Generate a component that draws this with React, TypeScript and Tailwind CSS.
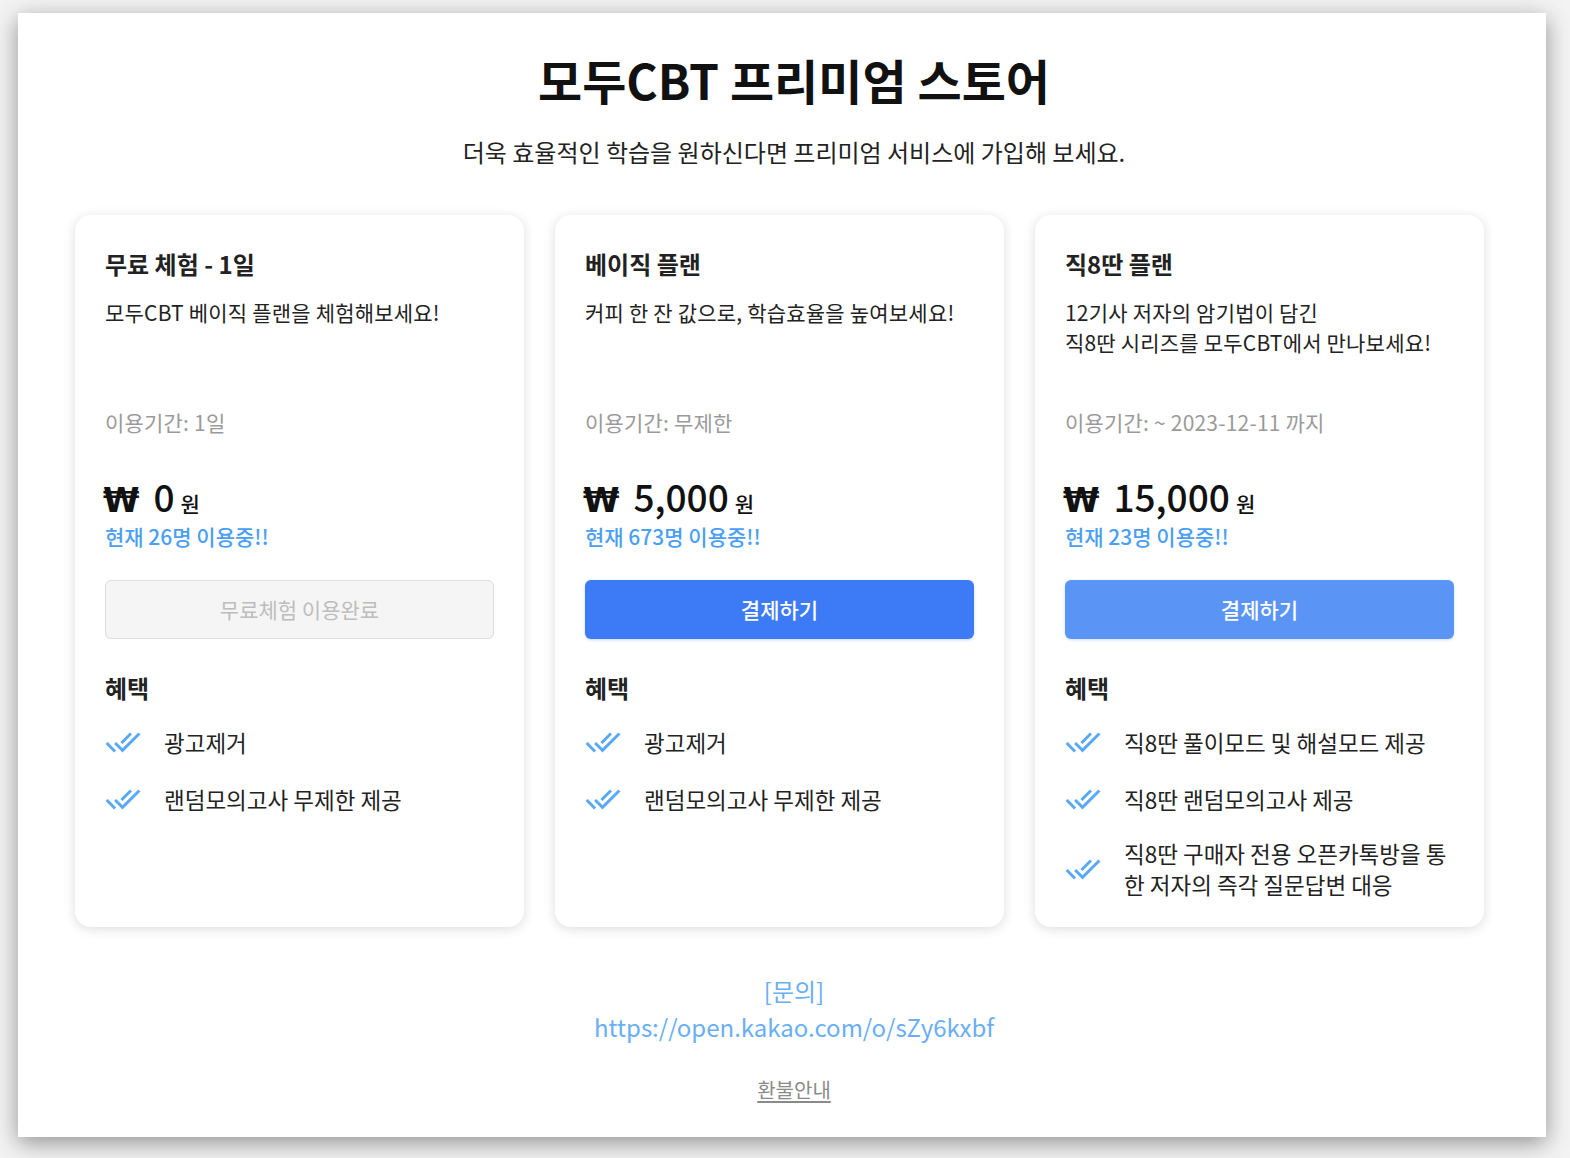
import React from "react";
import { MdDoneAll } from "react-icons/md";

type Plan = {
  title: string;
  desc: string[];
  period: string;
  price: string;
  users: string;
  button: "disabled" | "primary" | "light";
  buttonText: string;
  benefits: string[];
};

const plans: Plan[] = [
  {
    title: "무료 체험 - 1일",
    desc: ["모두CBT 베이직 플랜을 체험해보세요!"],
    period: "이용기간: 1일",
    price: "0",
    users: "현재 26명 이용중!!",
    button: "disabled",
    buttonText: "무료체험 이용완료",
    benefits: ["광고제거", "랜덤모의고사 무제한 제공"],
  },
  {
    title: "베이직 플랜",
    desc: ["커피 한 잔 값으로, 학습효율을 높여보세요!"],
    period: "이용기간: 무제한",
    price: "5,000",
    users: "현재 673명 이용중!!",
    button: "primary",
    buttonText: "결제하기",
    benefits: ["광고제거", "랜덤모의고사 무제한 제공"],
  },
  {
    title: "직8딴 플랜",
    desc: ["12기사 저자의 암기법이 담긴", "직8딴 시리즈를 모두CBT에서 만나보세요!"],
    period: "이용기간: ~ 2023-12-11 까지",
    price: "15,000",
    users: "현재 23명 이용중!!",
    button: "light",
    buttonText: "결제하기",
    benefits: [
      "직8딴 풀이모드 및 해설모드 제공",
      "직8딴 랜덤모의고사 제공",
      "직8딴 구매자 전용 오픈카톡방을 통한 저자의 즉각 질문답변 대응",
    ],
  },
];

function Card({ plan }: { plan: Plan }) {
  return (
    <div className="w-[449px] h-[712px] bg-white rounded-2xl shadow-[0_2px_12px_rgba(0,0,0,0.14)] pt-[34px] px-[30px] flex flex-col">
      <div className="text-[24px] leading-[30px] font-bold text-[#222]">{plan.title}</div>
      <div className="mt-[18px] h-[110px] text-[21px] leading-[30px] tracking-[0.2px] text-[#222]">
        {plan.desc.map((d, i) => (
          <div key={i}>{d}</div>
        ))}
      </div>
      <div className="text-[21px] leading-[30px] tracking-[0.2px] text-[#9a9a9a]">{plan.period}</div>
      <div className="mt-[37px] flex items-baseline h-[44px] leading-[44px] text-[#111]">
        <span
          className="text-[33px] font-bold ml-[-2px]"
          style={{ fontFamily: '"DejaVu Sans", sans-serif' }}
        >
          ₩
        </span>
        <span className="text-[37px] font-medium ml-[14px]">{plan.price}</span>
        <span className="text-[21px] font-medium ml-[6px]">원</span>
      </div>
      <div className="mt-[4px] text-[21px] leading-[28px] font-medium text-[#4a9ff5]">{plan.users}</div>
      <div className="mt-[30px]">
        {plan.button === "disabled" && (
          <div className="h-[59px] rounded-md border border-[#dcdcdc] bg-[#f5f5f5] flex items-center justify-center text-[21px] text-[#bdbdbd]">
            {plan.buttonText}
          </div>
        )}
        {plan.button === "primary" && (
          <div className="h-[59px] rounded-md bg-[#3d7af5] flex items-center justify-center text-[21px] font-medium text-white shadow-[0_1px_3px_rgba(61,122,245,0.3)]">
            {plan.buttonText}
          </div>
        )}
        {plan.button === "light" && (
          <div className="h-[59px] rounded-md bg-[#5a95f6] flex items-center justify-center text-[21px] font-medium text-white shadow-[0_1px_3px_rgba(90,149,246,0.3)]">
            {plan.buttonText}
          </div>
        )}
      </div>
      <div className="mt-[35px] text-[24px] leading-[28px] font-bold text-[#222]">혜택</div>
      <div className="mt-[22px] flex flex-col gap-[21px]">
        {plan.benefits.map((b, i) => (
          <div key={i} className="flex items-center min-h-[36px]">
            <MdDoneAll className="shrink-0 text-[#5aa9f5]" size={36} />
            <div className="ml-[23px] text-[22.5px] leading-[31px] text-[#222]">{b}</div>
          </div>
        ))}
      </div>
    </div>
  );
}

export default function App() {
  return (
    <div
      className="w-[1570px] h-[1158px] bg-[#f3f3f3] pt-[13px] pl-[18px]"
      style={{ fontFamily: '"Noto Sans CJK KR", "Noto Sans", sans-serif' }}
    >
      <div className="w-[1528px] h-[1124px] bg-white shadow-[0_6px_22px_rgba(0,0,0,0.4)] pt-[36px] flex flex-col">
        <div className="pl-[24px] text-center">
          <h1 className="text-[48px] leading-[60px] font-bold text-[#111]">모두CBT 프리미엄 스토어</h1>
          <p className="mt-[27px] text-[24px] leading-[32px] text-[#222]">
            더욱 효율적인 학습을 원하신다면 프리미엄 서비스에 가입해 보세요.
          </p>
        </div>
        <div className="mt-[47px] ml-[57px] flex gap-[31px]">
          {plans.map((p, i) => (
            <Card key={i} plan={p} />
          ))}
        </div>
        <div className="pl-[24px] mt-[46px] text-center">
          <div className="text-[24px] leading-[36px] text-[#6aaef5]">[문의]</div>
          <div className="text-[24px] leading-[36px] text-[#6aaef5]">https://open.kakao.com/o/sZy6kxbf</div>
          <div className="mt-[31px] text-[20px] leading-[28px] text-[#8a8a8a] underline underline-offset-[3px]">
            환불안내
          </div>
        </div>
      </div>
    </div>
  );
}
